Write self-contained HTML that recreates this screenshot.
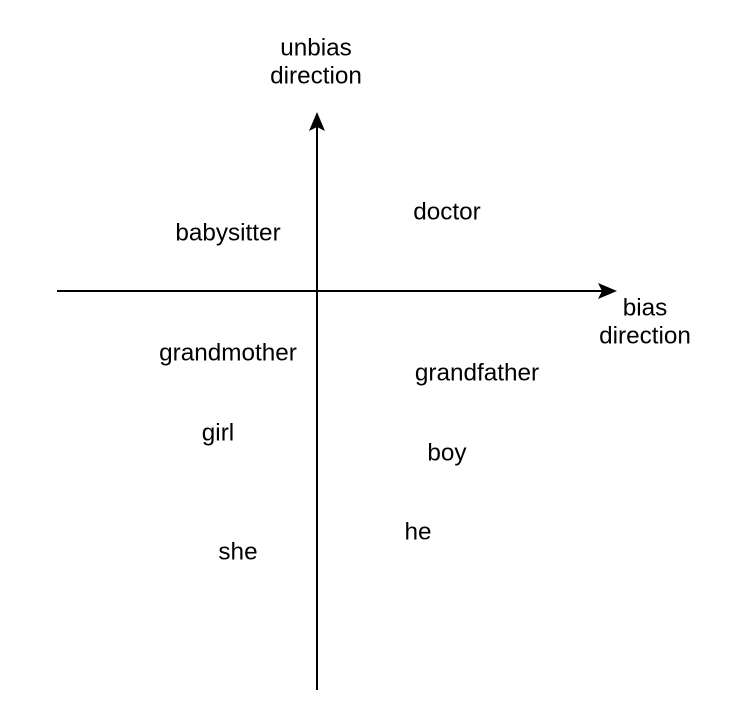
<!DOCTYPE html>
<html><head><style>html,body{margin:0;padding:0;background:#fff;}svg{display:block}</style></head>
<body>
<svg width="740" height="716" xmlns="http://www.w3.org/2000/svg" font-family="Liberation Sans, Arial, sans-serif" font-size="24.3" fill="#000">
<rect width="740" height="716" fill="#fff"/>
<line x1="317" y1="690" x2="317" y2="124" stroke="#000" stroke-width="2"/>
<path d="M317 112 L325 131 L317 127 L309 131 Z" fill="#000"/>
<line x1="57" y1="291" x2="606" y2="291" stroke="#000" stroke-width="2"/>
<path d="M617 291 L598 299 L602 291 L598 283 Z" fill="#000"/>
<g text-anchor="middle" dominant-baseline="central">
<text x="316" y="48">unbias</text>
<text x="316" y="76">direction</text>
<text x="228" y="233">babysitter</text>
<text x="447" y="212">doctor</text>
<text x="645" y="308">bias</text>
<text x="645" y="336">direction</text>
<text x="228" y="353">grandmother</text>
<text x="477" y="373">grandfather</text>
<text x="218" y="433">girl</text>
<text x="447" y="453">boy</text>
<text x="418" y="532">he</text>
<text x="238" y="552">she</text>
</g>
</svg>
</body></html>
